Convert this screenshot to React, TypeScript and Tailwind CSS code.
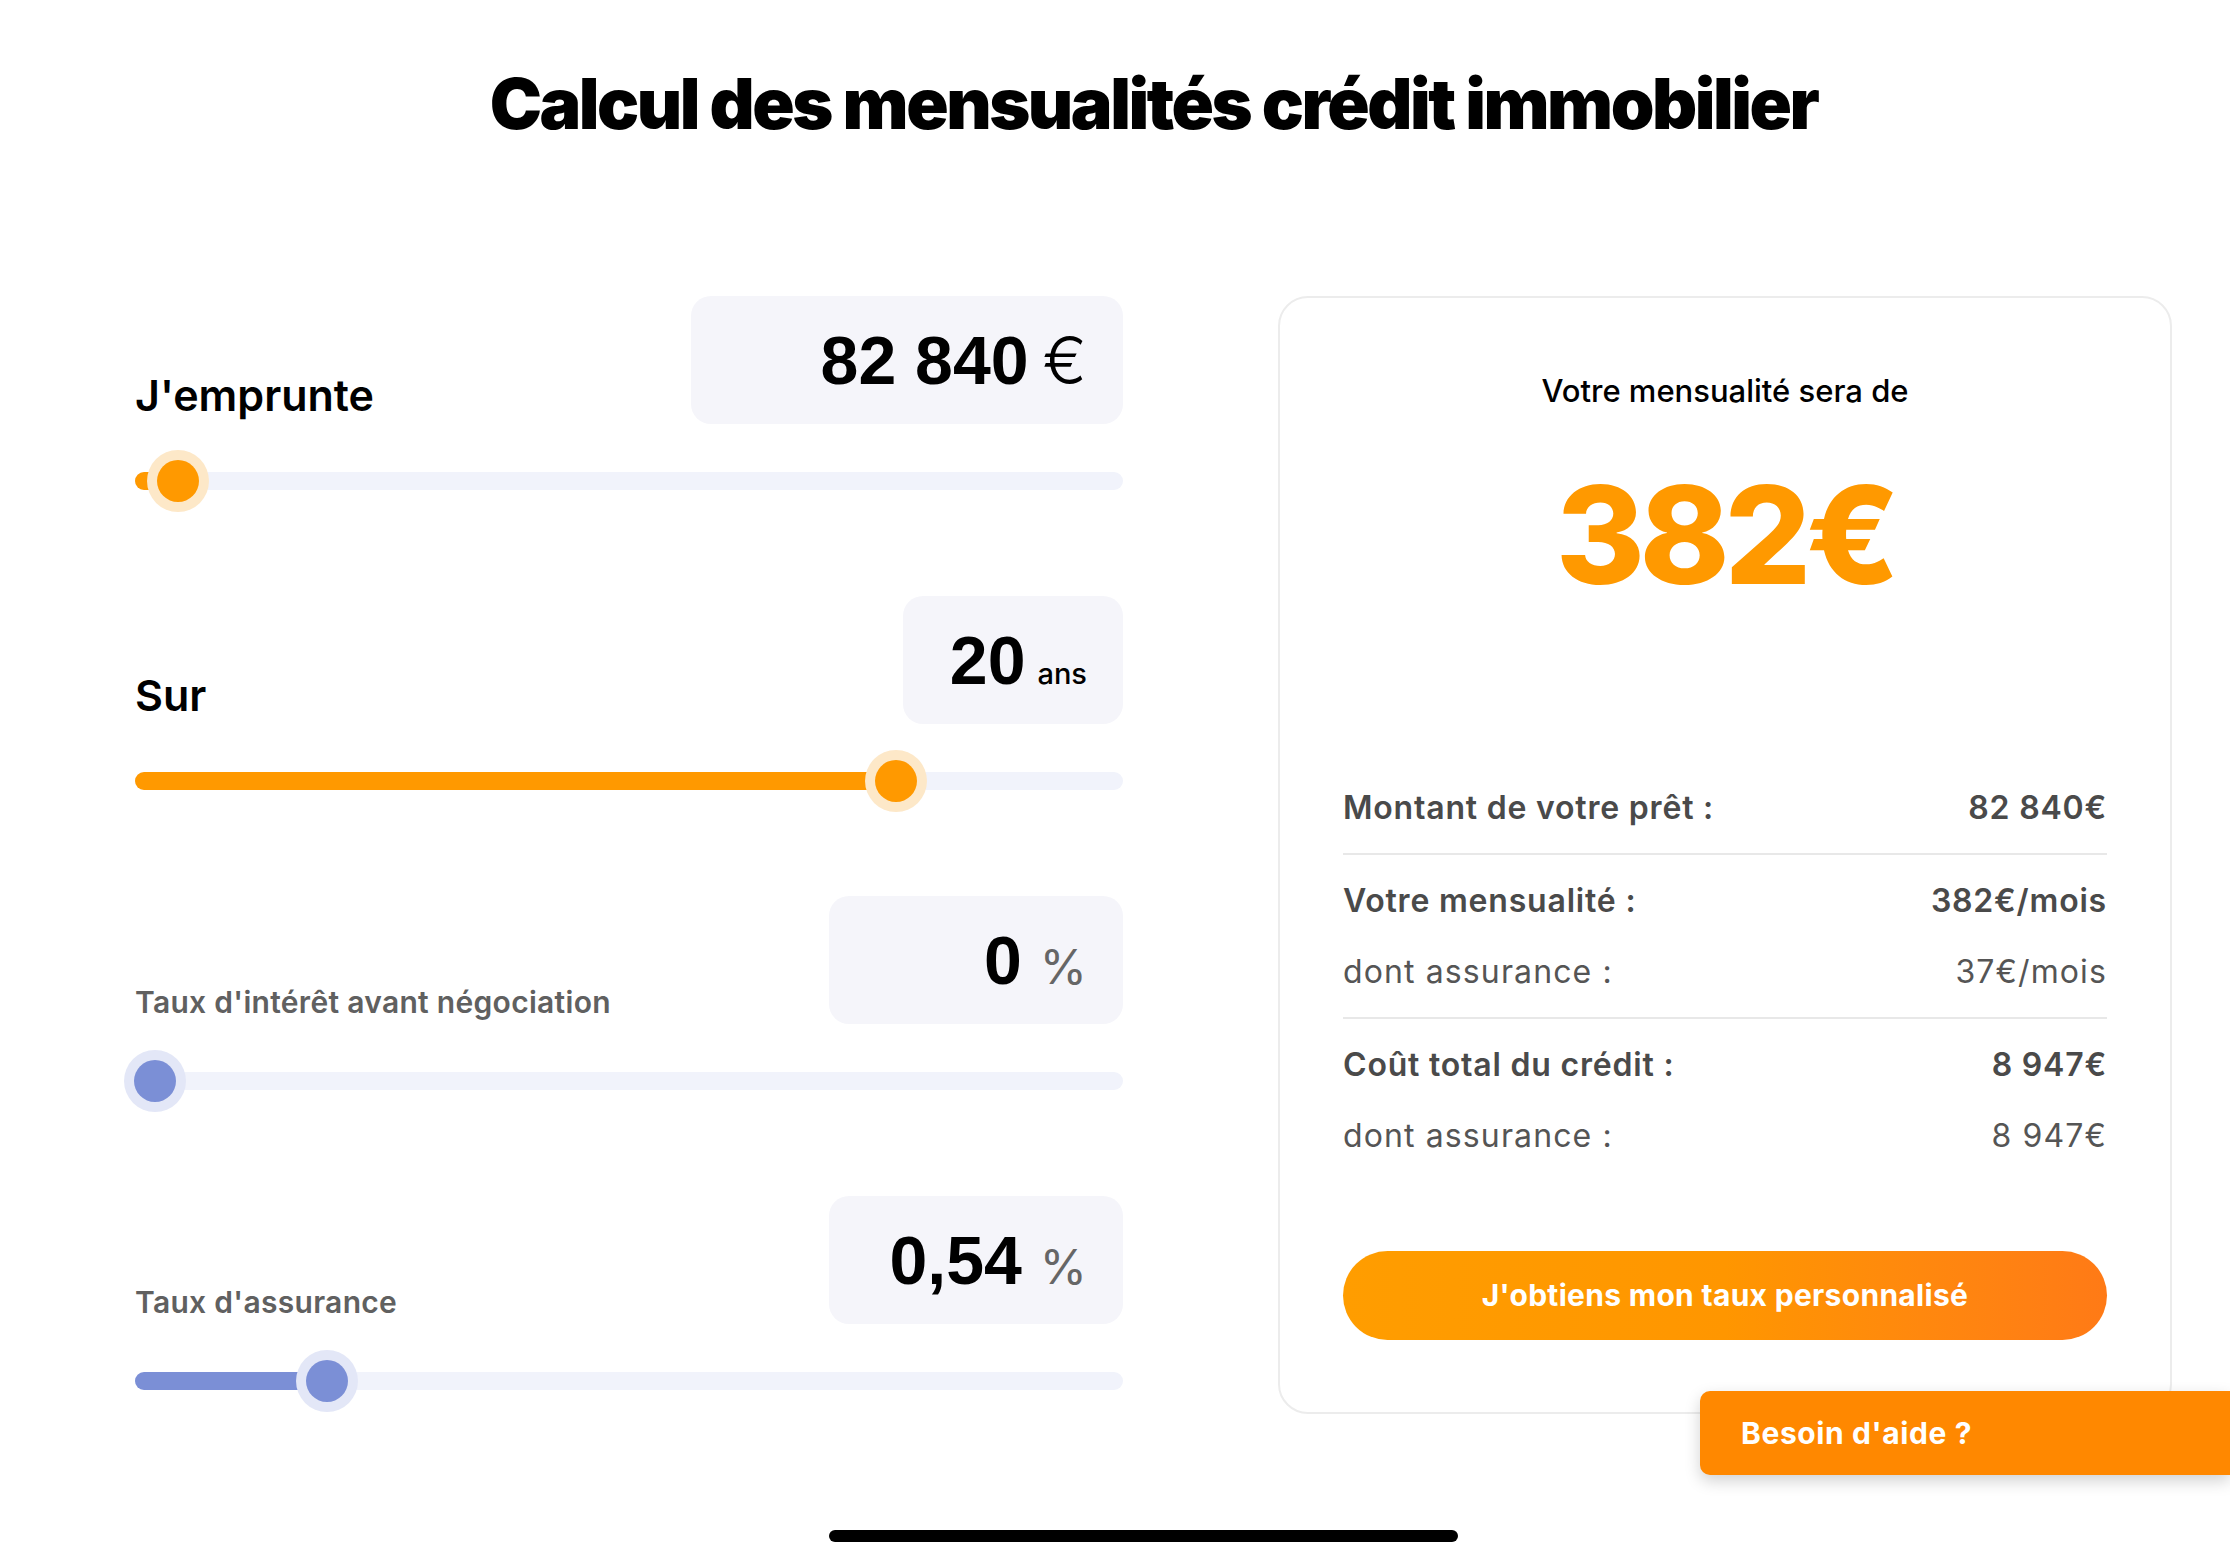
import React from "react"

type SliderProps = {
  offset: number
  fill: string
  thumb: string
  halo: string
  showFill?: boolean
}

// track is 988px wide, thumb centre given in px from the left edge
function Slider({ offset, fill, thumb, halo, showFill = true }: SliderProps) {
  return (
    <div className="relative mt-[26px] flex h-[62px] items-center">
      <div className="relative h-[18px] w-full rounded-full bg-[#f1f3fb]">
        {showFill && (
          <div className={`absolute inset-y-0 left-0 rounded-full ${fill}`} style={{ width: offset }} />
        )}
      </div>
      <div
        className={`absolute top-0 flex h-[62px] w-[62px] items-center justify-center rounded-full ${halo}`}
        style={{ left: offset - 31 }}
      >
        <div className={`h-[42px] w-[42px] rounded-full ${thumb}`} />
      </div>
    </div>
  )
}

function ValueBox({ width, children }: { width: string; children: React.ReactNode }) {
  return (
    <div className={`flex h-[128px] items-center justify-end rounded-[20px] bg-[#f5f5fa] pr-[36px] ${width}`}>
      <div className="flex items-baseline leading-none">{children}</div>
    </div>
  )
}

function Num({ children }: { children: React.ReactNode }) {
  return <span className="font-['Liberation_Sans',Arial,sans-serif] text-[68px] font-bold">{children}</span>
}

function Row({ label, value, strong }: { label: string; value: string; strong?: boolean }) {
  return (
    <div
      className={`flex h-[71px] items-center justify-between text-[32px] ${
        strong ? "font-semibold tracking-[0.025em] text-[#4a4a4a]" : "font-normal tracking-[0.035em] text-[#555555]"
      }`}
    >
      <span>{label}</span>
      <span>{value}</span>
    </div>
  )
}

export default function App() {
  return (
    <div className="relative min-h-[1558px] w-full overflow-hidden bg-white font-['Inter','Liberation_Sans',sans-serif] text-black">
      <div className="ml-[135px] w-[2037px] pt-[64px]">
        <h1 className="text-center text-[70px] font-black leading-[80px] tracking-[-0.035em]">
          Calcul des mensualités crédit immobilier
        </h1>

        <div className="mt-[152px] flex items-start justify-between">
          {/* Left: inputs + sliders */}
          <div className="flex w-[988px] flex-col gap-[84px]">
            <div>
              <div className="flex items-end justify-between">
                <span className="pb-[7px] text-[43px] font-semibold leading-none">J'emprunte</span>
                <ValueBox width="w-[432px]">
                  <Num>82 840</Num>
                  <span className="ml-[14px] text-[66px] font-light">€</span>
                </ValueBox>
              </div>
              <Slider offset={43} fill="bg-[#ff9900]" thumb="bg-[#ff9900]" halo="bg-[#fde8c8]" />
            </div>

            <div>
              <div className="flex items-end justify-between">
                <span className="pb-[7px] text-[43px] font-semibold leading-none">Sur</span>
                <ValueBox width="w-[220px]">
                  <Num>20</Num>
                  <span className="ml-[12px] text-[29px] font-medium">ans</span>
                </ValueBox>
              </div>
              <Slider offset={761} fill="bg-[#ff9900]" thumb="bg-[#ff9900]" halo="bg-[#fde8c8]" />
            </div>

            <div>
              <div className="flex items-end justify-between">
                <span className="pb-[7px] text-[30px] font-semibold leading-none tracking-[0.01em] text-[#606060]">
                  Taux d'intérêt avant négociation
                </span>
                <ValueBox width="w-[294px]">
                  <Num>0</Num>
                  <span className="ml-[18px] text-[48px] font-normal text-[#666666]">%</span>
                </ValueBox>
              </div>
              <Slider offset={20} fill="bg-[#7b8fd6]" thumb="bg-[#7b8fd6]" halo="bg-[#e3e7f7]" showFill={false} />
            </div>

            <div>
              <div className="flex items-end justify-between">
                <span className="pb-[7px] text-[30px] font-semibold leading-none tracking-[0.01em] text-[#606060]">
                  Taux d'assurance
                </span>
                <ValueBox width="w-[294px]">
                  <Num>0,54</Num>
                  <span className="ml-[18px] text-[48px] font-normal text-[#666666]">%</span>
                </ValueBox>
              </div>
              <Slider offset={192} fill="bg-[#7b8fd6]" thumb="bg-[#7b8fd6]" halo="bg-[#e3e7f7]" />
            </div>
          </div>

          {/* Right: result card */}
          <div className="flex h-[1118px] w-[894px] flex-col rounded-[30px] border-2 border-[#ececec] px-[63px] pt-[73px]">
            <p className="text-center text-[31px] font-medium leading-[40px]">Votre mensualité sera de</p>
            <p className="mt-[56px] text-center text-[136px] font-extrabold leading-none tracking-[-0.04em] text-[#ff9900]">
              382€
            </p>

            <div className="mt-[169px] flex flex-col">
              <Row label="Montant de votre prêt :" value="82 840€" strong />
              <div className="my-[10px] h-[2px] bg-[#e8e8e8]" />
              <Row label="Votre mensualité :" value="382€/mois" strong />
              <Row label="dont assurance :" value="37€/mois" />
              <div className="my-[10px] h-[2px] bg-[#e8e8e8]" />
              <Row label="Coût total du crédit :" value="8 947€" strong />
              <Row label="dont assurance :" value="8 947€" />
            </div>

            <button className="mt-[80px] flex h-[89px] w-full items-center justify-center rounded-full bg-linear-to-r from-[#ff9d00] via-[#ff9600] to-[#ff7a16] text-[30px] font-bold tracking-[0.01em] text-white">
              J'obtiens mon taux personnalisé
            </button>
          </div>
        </div>
      </div>

      {/* floating help tab */}
      <div className="absolute left-[1700px] top-[1391px] flex h-[84px] w-[530px] items-center rounded-l-[10px] bg-[#ff8800] pl-[41px] text-[30px] font-bold tracking-[0.02em] text-white shadow-[0_6px_16px_rgba(0,0,0,0.18)]">
        Besoin d'aide ?
      </div>

      {/* home indicator */}
      <div className="absolute left-[829px] top-[1530px] h-[12px] w-[629px] rounded-full bg-black" />
    </div>
  )
}
